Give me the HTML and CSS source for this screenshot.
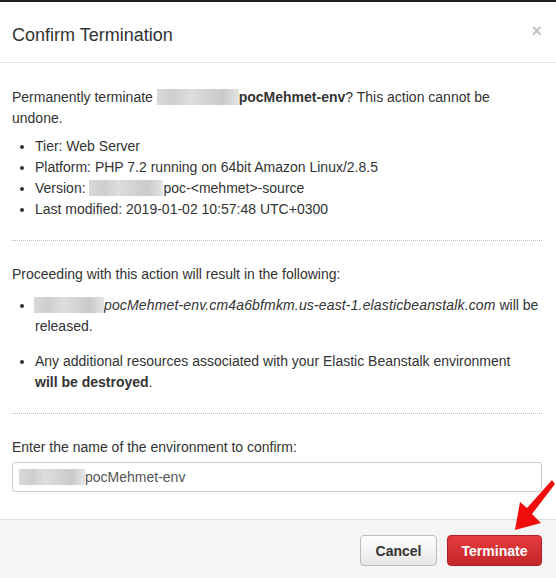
FILE: index.html
```html
<!DOCTYPE html>
<html lang="en">

<head>
    <meta charset="UTF-8">
    <meta name="viewport" content="width=device-width, initial-scale=1.0">
    <title>Confirm Termination</title>
    <link rel="stylesheet" href="styles.css">
</head>

<body>
    <div class="topbar"></div>
    <div class="modal">
        <div class="modal-header">
            <h3>Confirm Termination</h3>
            <span class="close">&times;</span>
        </div>
        <div class="modal-body">
            <p class="intro">Permanently terminate <span class="blur blur-name"></span><b>pocMehmet-env</b>? This action cannot be undone.</p>
            <ul class="details">
                <li>Tier: Web Server</li>
                <li>Platform: PHP 7.2 running on 64bit Amazon Linux/2.8.5</li>
                <li>Version: <span class="blur blur-version"></span>poc-&lt;mehmet&gt;-source</li>
                <li>Last modified: 2019-01-02 10:57:48 UTC+0300</li>
            </ul>
            <hr class="dotted">
            <p class="result">Proceeding with this action will result in the following:</p>
            <ul class="effects">
                <li><span class="blur blur-url"></span><i>pocMehmet-env.cm4a6bfmkm.us-east-1.elasticbeanstalk.com</i> will be released.</li>
                <li>Any additional resources associated with your Elastic Beanstalk environment<br><b>will be destroyed</b>.</li>
            </ul>
            <hr class="dotted">
            <label class="confirm-label">Enter the name of the environment to confirm:</label>
            <div class="confirm-input"><span class="blur blur-input"></span>pocMehmet-env</div>
        </div>
        <div class="modal-footer">
            <button class="btn btn-cancel">Cancel</button>
            <button class="btn btn-terminate">Terminate</button>
        </div>
    </div>
    <svg class="arrow" width="51" height="60" viewBox="0 0 51 60">
        <polygon points="47,5 22,33 15,27 10,55 36,48 27,39 50,9" fill="#f20d0d" />
    </svg>
</body>

</html>
```

FILE: styles.css
```css
body {
    font-family: "Liberation Sans", Arial, sans-serif;
    margin: 0;
    padding: 0;
    color: #333;
    font-size: 14px;
    line-height: 21px;
    background: #fff;
}

.topbar {
    height: 2px;
    background-color: #1f1f1f;
}

.modal-header {
    height: 60px;
    display: flex;
    align-items: center;
    justify-content: space-between;
    padding: 0 14px 0 12px;
    border-bottom: 1px solid #e5e5e5;
}

.modal-header h3 {
    margin: 0;
    font-size: 18px;
    font-weight: normal;
    color: #333;
    padding-top: 6px;
}

.close {
    color: #c4c4c4;
    font-size: 18px;
    font-weight: bold;
    margin-top: -2px;
}

.modal-body {
    padding: 24px 14px 27px 12px;
}

.modal-body p {
    margin: 0;
}

.modal-body ul {
    margin: 0;
    padding-left: 23px;
}

.details {
    margin-top: 7px !important;
}

.dotted {
    border: none;
    border-top: 1px dotted #bbb;
    margin: 20px 0 23px;
}

.effects {
    margin-top: 10px !important;
}

.effects i {
    letter-spacing: 0.15px;
}

.effects li + li {
    margin-top: 14px;
}

.blur {
    display: inline-block;
    height: 16px;
    vertical-align: -3px;
    background: linear-gradient(90deg, #d5d5d5 0%, #c8c8c8 20%, #dadada 40%, #cfcfcf 60%, #c4c4c4 80%, #e2e2e2 100%);
    opacity: 0.9;
}

.blur-name {
    width: 82px;
}

.blur-version {
    width: 74px;
}

.blur-url {
    width: 70px;
    margin-left: -1px;
}

.blur-input {
    width: 66px;
}

.confirm-label {
    display: block;
    margin-bottom: 4px;
}

.confirm-input {
    height: 28px;
    line-height: 28px;
    border: 1px solid #ccc;
    border-radius: 3px;
    padding: 0 6px;
    color: #555;
}

.modal-footer {
    background-color: #f5f5f5;
    border-top: 1px solid #ddd;
    display: flex;
    justify-content: flex-end;
    gap: 10px;
    padding: 15px 14px 20px;
}

.btn {
    height: 31px;
    border-radius: 4px;
    font-family: "Liberation Sans", Arial, sans-serif;
    font-size: 14px;
    font-weight: bold;
    cursor: pointer;
}

.btn-cancel {
    width: 77px;
    color: #333;
    background: linear-gradient(#fff, #e6e6e6);
    border: 1px solid #bdbdbd;
}

.btn-terminate {
    width: 95px;
    color: #fff;
    background: linear-gradient(#e63b3d, #c3262a);
    border: 1px solid #b52024;
}

.arrow {
    position: absolute;
    left: 505px;
    top: 475px;
}
```
